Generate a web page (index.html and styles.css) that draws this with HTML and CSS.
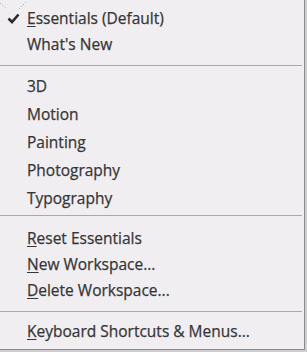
FILE: index.html
```html
<!DOCTYPE html>
<html lang="en">
<head>
    <meta charset="UTF-8">
    <meta name="viewport" content="width=device-width, initial-scale=1.0">
    <title>Workspace Menu</title>
    <link rel="stylesheet" href="styles.css">
</head>
<body>
    <div class="menu">
        <!-- faint drag trail in the corner -->
        <svg class="trail" width="30" height="12" viewBox="0 0 30 12">
            <path d="M0 3 L6 8" stroke="#9a9a9a" stroke-width="1" stroke-dasharray="1 2" fill="none"/>
            <path d="M19 9 L26 2" stroke="#9a9a9a" stroke-width="1" stroke-dasharray="1 2" fill="none"/>
        </svg>

        <div class="group">
            <div class="item checked">
                <svg class="check" width="13" height="11" viewBox="0 0 13 11">
                    <path d="M1.5 5.5 L5 9 L11.5 1.5" stroke="#2b2b2b" stroke-width="2.6" fill="none"/>
                </svg>
                <span><u>E</u>ssentials (Default)</span>
            </div>
            <div class="item"><span>What's New</span></div>
        </div>

        <div class="sep sep-a"></div>

        <div class="group tall">
            <div class="item"><span>3D</span></div>
            <div class="item"><span>Motion</span></div>
            <div class="item"><span>Painting</span></div>
            <div class="item"><span>Photography</span></div>
            <div class="item"><span>Typography</span></div>
        </div>

        <div class="sep sep-b"></div>

        <div class="group">
            <div class="item"><span><u>R</u>eset Essentials</span></div>
            <div class="item"><span><u>N</u>ew Workspace...</span></div>
            <div class="item"><span><u>D</u>elete Workspace...</span></div>
        </div>

        <div class="sep sep-a"></div>

        <div class="group">
            <div class="item"><span><u>K</u>eyboard Shortcuts &amp; Menus...</span></div>
        </div>
    </div>
</body>
</html>
```

FILE: styles.css
```css
body {
    margin: 0;
    padding: 0;
    background-color: #cfcfd1;
    font-family: "Open Sans", "Noto Sans", sans-serif;
}
.menu {
    position: relative;
    width: 305px;
    height: 350px;
    box-sizing: border-box;
    padding-top: 5px;
    background-color: #f0eef1;
    border-right: 1px solid #8c8c8e;
    border-bottom: 1px solid #8c8c8e;
    color: #363636;
    font-size: 15.5px;
    -webkit-text-stroke: 0.25px #363636;
}
.trail {
    position: absolute;
    left: 0;
    top: 0;
}
.item {
    display: flex;
    align-items: center;
    height: 26px;
    padding-left: 27px;
    line-height: 26px;
    position: relative;
}
.tall .item {
    height: 28px;
    line-height: 28px;
}
.item u {
    text-decoration: underline;
    text-decoration-thickness: 1px;
    text-underline-offset: 2px;
}
.check {
    position: absolute;
    left: 7px;
    top: 8px;
}
.sep {
    height: 1px;
    width: 302px;
    background-color: #a9a9ab;
}
.sep-a {
    margin-top: 8px;
    margin-bottom: 6px;
}
.sep-b {
    margin-top: 3px;
    margin-bottom: 9px;
}
```
